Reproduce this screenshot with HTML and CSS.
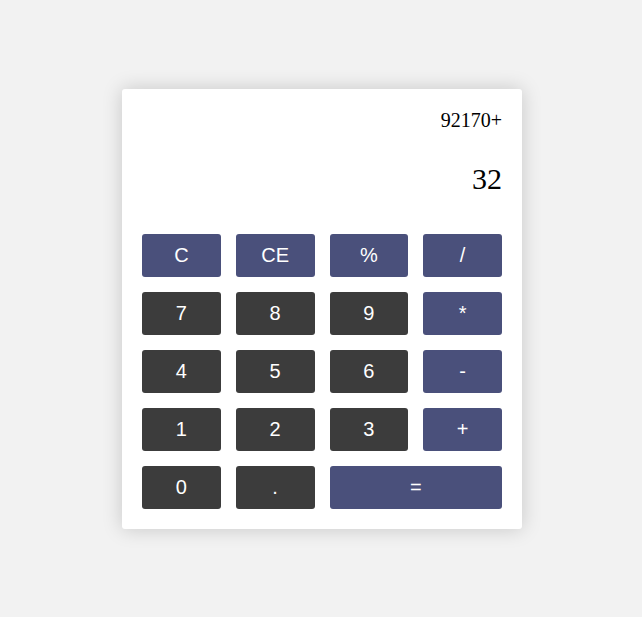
FILE: index.html
```html
<!DOCTYPE html>
<html>
<head>
<meta charset="utf-8">
<link rel="stylesheet" href="styles.css">
</head>
<body>
<div class="calculator">
  <div class="display">
    <div class="previous">92170+</div>
    <div class="current">32</div>
  </div>
  <div class="keys">
    <button class="key op">C</button>
    <button class="key op">CE</button>
    <button class="key op">%</button>
    <button class="key op">/</button>
    <button class="key num">7</button>
    <button class="key num">8</button>
    <button class="key num">9</button>
    <button class="key op">*</button>
    <button class="key num">4</button>
    <button class="key num">5</button>
    <button class="key num">6</button>
    <button class="key op">-</button>
    <button class="key num">1</button>
    <button class="key num">2</button>
    <button class="key num">3</button>
    <button class="key op">+</button>
    <button class="key num">0</button>
    <button class="key num">.</button>
    <button class="key op wide">=</button>
  </div>
</div>
</body>
</html>
```
FILE: styles.css
```css
html, body {
  margin: 0;
  padding: 0;
}
body {
  background: #f2f2f2;
  min-height: 100vh;
  box-sizing: border-box;
  padding-left: 2px;
  display: flex;
  align-items: center;
  justify-content: center;
  font-family: "Liberation Serif", serif;
}
.calculator {
  width: 400px;
  box-sizing: border-box;
  padding: 20px;
  background: #ffffff;
  border-radius: 3px;
  box-shadow: 0 0 20px rgba(0, 0, 0, 0.18);
}
.display {
  height: 125px;
  display: flex;
  flex-direction: column;
  align-items: flex-end;
  color: #000;
}
.previous {
  font-size: 20px;
  line-height: 23px;
}
.current {
  font-size: 30px;
  line-height: 34px;
  margin-top: 30px;
}
.keys {
  display: grid;
  grid-template-columns: repeat(4, 1fr);
  gap: 15px;
}
.key {
  height: 43px;
  border: none;
  border-radius: 3px;
  color: #ffffff;
  font-family: "Liberation Sans", Arial, sans-serif;
  font-size: 20px;
  padding: 0;
}
.op {
  background: #4a507b;
}
.num {
  background: #3c3c3c;
}
.wide {
  grid-column: span 2;
}
```
